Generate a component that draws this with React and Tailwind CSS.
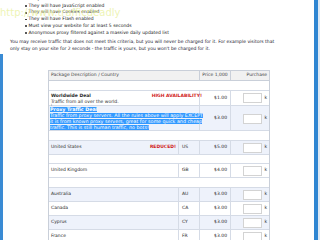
import React from 'react';

const bullets = [
  'Unique within a 24 hour time frame',
  'They will have JavaScript enabled',
  'They will have Cookies enabled',
  'They will have Flash enabled',
  'Must view your website for at least 5 seconds',
  'Anonymous proxy filtered against a massive daily updated list',
];

const countries = [
  { name: 'Australia', code: 'AU', price: '$3.00' },
  { name: 'Canada', code: 'CA', price: '$3.00' },
  { name: 'Cyprus', code: 'CY', price: '$3.00' },
  { name: 'France', code: 'FR', price: '$3.00' },
];

const cols = 'grid grid-cols-[129px_21px_31px_39px]';

const Buy = () => (
  <div className="flex items-center justify-end gap-[2px] pr-[2px]">
    <div className="w-[19px] h-[10px] bg-white border border-[#d3d3d3]" />
    <span>k</span>
  </div>
);

const Price = ({ value }) => (
  <div className="border-l border-[#d5dbe6] flex items-center justify-end pr-[3px]">{value}</div>
);

const CountryRow = ({ name, code, price, tag, blue }) => (
  <div className={`${cols} h-[14px] border-b border-[#d5dbe6] ${blue ? 'bg-[#eef2fb]' : 'bg-white'}`}>
    <div className="flex items-center justify-between pl-[2px] pr-[2px]">
      <span>{name}</span>
      {tag && <span className="font-bold text-[#d02020]">{tag}</span>}
    </div>
    <div className="border-l border-[#d5dbe6] flex items-center pl-[3px]">{code}</div>
    <Price value={price} />
    <div className="border-l border-[#d5dbe6] flex items-center justify-end"><Buy /></div>
  </div>
);

const Spacer = ({ h }) => <div className={`${h} border-b border-[#d5dbe6] bg-white`} />;

export default function App() {
  return (
    <div className="w-[320px] h-[240px] overflow-hidden bg-white flex relative font-['DejaVu_Sans',sans-serif] text-[4.5px] text-[#1a1a1a]">
      <div className="w-[314px] flex flex-col">
        <ul className="mt-[-4px] pl-[25px] leading-[6.7px]">
          {bullets.map((b) => (
            <li key={b} className="flex items-center gap-[2px]">
              <span className="w-[1.5px] h-[1.5px] rounded-full bg-[#222]" />
              <span>{b}</span>
            </li>
          ))}
        </ul>
        <p className="mt-[2px] pl-[10px] leading-[7px] text-[#1c2030]">
          You may receive traffic that does not meet this criteria, but you will never be charged for it. For example visitors that
          <br />
          only stay on your site for 2 seconds - the traffic is yours, but you won't be charged for it.
        </p>

        <div className="flex-1 mt-[2px] border-l-[3px] border-[#3a8bd4] pt-[16px] pl-[45px] text-[#2a2a2a]">
          <div className="w-[222px] border-l border-r border-t border-[#c9cfd9]">
            <div className={`${cols} h-[10px] bg-[#f1f1f1] border-b border-[#c9cfd9] text-[#444]`}>
              <div className="col-span-2 flex items-center pl-[2px]">Package Description / Country</div>
              <div className="border-l border-[#c9cfd9] flex items-center justify-center">Price 1,000</div>
              <div className="border-l border-[#c9cfd9] flex items-center justify-end pr-[2px]">Purchase</div>
            </div>
            <Spacer h="h-[10px]" />

            <div className={`${cols} h-[15px] border-b border-[#d5dbe6] bg-white`}>
              <div className="col-span-2 flex justify-between pl-[2px] pr-[1px] pt-[2px] leading-[5.5px]">
                <div>
                  <div className="font-bold">Worldwide Deal</div>
                  <div>Traffic from all over the world.</div>
                </div>
                <span className="font-bold text-[#d02020] mr-[-4px] relative">HIGH AVAILABILITY!</span>
              </div>
              <Price value="$1.00" />
              <div className="border-l border-[#d5dbe6] flex items-center justify-end"><Buy /></div>
            </div>

            <div className={`${cols} h-[25px] border-b border-[#d5dbe6] bg-[#eef2fb]`}>
              <div className="col-span-2 pl-[1px] pt-[1px] leading-[5.9px] text-[4.8px] whitespace-nowrap relative">
                <span className="absolute left-[2px] top-[-3px] text-[3px] text-[#555]">I</span>
                <span className="bg-[#3399ff] text-white">
                  <b>Proxy Traffic Deal</b>
                  <br />
                  Traffic from proxy servers. All the rules above will apply EXCEPT
                  <br />
                  it is from known proxy servers, great for some quick and cheap
                  <br />
                  traffic. This is still human traffic, no bots!
                </span>
              </div>
              <Price value="$3.00" />
              <div className="border-l border-[#d5dbe6] flex items-center justify-end"><Buy /></div>
            </div>
            <Spacer h="h-[10px]" />

            <CountryRow name="United States" code="US" price="$5.00" tag="REDUCED!" blue />
            <Spacer h="h-[9px]" />
            <CountryRow name="United Kingdom" code="GB" price="$4.00" />
            <Spacer h="h-[10px]" />
            {countries.map((c, i) => (
              <CountryRow key={c.code} {...c} blue={i % 2 === 0} />
            ))}
          </div>
        </div>
      </div>
      <div className="w-[4px] bg-[#2f86d2]" />
      <div className="w-[2px] bg-[#dce8f4]" />
      <div className="absolute left-0 top-[7px] text-[10px] leading-[11px] text-[#e8f09a]/75 font-['DejaVu_Sans',sans-serif] whitespace-nowrap">
        http://www.trafficdeadly
      </div>
    </div>
  );
}
